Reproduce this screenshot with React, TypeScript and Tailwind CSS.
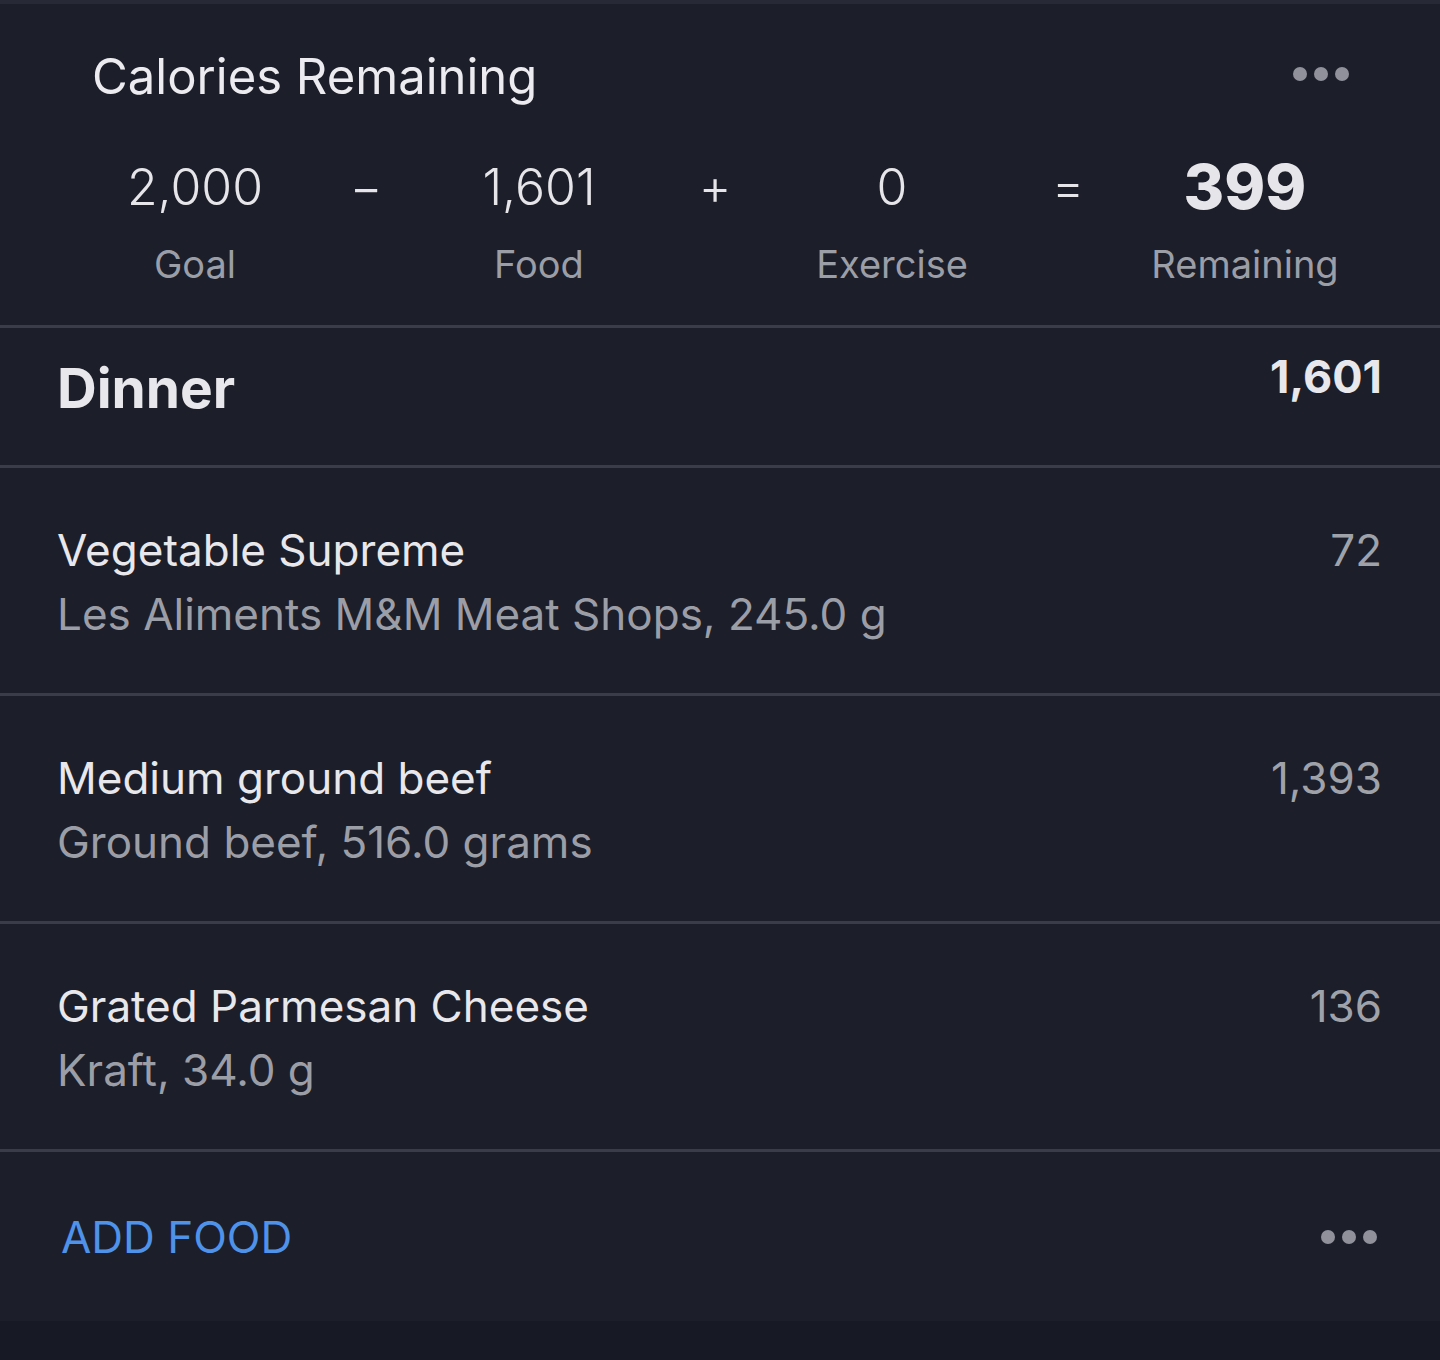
import React from "react";

type Entry = { name: string; detail: string; kcal: string };

const ENTRIES: Entry[] = [
  { name: "Vegetable Supreme", detail: "Les Aliments M&M Meat Shops, 245.0 g", kcal: "72" },
  { name: "Medium ground beef", detail: "Ground beef, 516.0 grams", kcal: "1,393" },
  { name: "Grated Parmesan Cheese", detail: "Kraft, 34.0 g", kcal: "136" },
];

function Dots() {
  return (
    <div className="flex items-center gap-[7px]">
      <span className="block w-[14px] h-[14px] rounded-full bg-[#90919b]" />
      <span className="block w-[14px] h-[14px] rounded-full bg-[#90919b]" />
      <span className="block w-[14px] h-[14px] rounded-full bg-[#90919b]" />
    </div>
  );
}

function Stat({ value, label, strong }: { value: string; label: string; strong?: boolean }) {
  return (
    <div className="flex flex-col items-center">
      <div
        className={
          strong
            ? "text-[62px] leading-[60px] font-extrabold text-[#e6e6ea]"
            : "text-[50px] leading-[60px] font-light text-[#e6e6ea]"
        }
      >
        {value}
      </div>
      <div className="mt-[22px] text-[38px] leading-[50px] text-[#9c9ea7]">{label}</div>
    </div>
  );
}

function Op({ sign }: { sign: string }) {
  return (
    <div className="flex justify-center">
      <div className="text-[50px] leading-[60px] font-light text-[#e6e6ea]">{sign}</div>
    </div>
  );
}

function Divider() {
  return <div className="h-[3px] bg-[#3a3d49]" />;
}

export default function App() {
  return (
    <div className="min-h-[1360px] bg-[#171a24] font-['Inter',sans-serif]">
      <div className="bg-[#1c1e29]">
        <div className="h-[4px] bg-[#272a36]" />

        {/* summary */}
        <div className="pt-[43px] pb-[36px]">
          <div className="flex items-center justify-between pl-[92px] pr-[91px]">
            <h1 className="text-[49px] leading-[60px] text-[#ececf0]">Calories Remaining</h1>
            <div className="mb-[6px]">
              <Dots />
            </div>
          </div>
          <div className="mt-[50px] ml-[109px] grid grid-cols-[172px_170px_176px_176px_178px_174px_180px]">
            <Stat value="2,000" label="Goal" />
            <Op sign="−" />
            <Stat value="1,601" label="Food" />
            <Op sign="+" />
            <Stat value="0" label="Exercise" />
            <Op sign="=" />
            <Stat value="399" label="Remaining" strong />
          </div>
        </div>
        <Divider />

        {/* meal header */}
        <div className="flex justify-between pl-[57px] pr-[58px] pt-[22px] h-[137px]">
          <div className="mt-[5px] text-[55px] leading-[66px] font-bold text-[#e8e8ec]">Dinner</div>
          <div className="text-[45px] leading-[54px] font-bold text-[#e8e8ec]">1,601</div>
        </div>
        <Divider />

        {ENTRIES.map((e) => (
          <React.Fragment key={e.name}>
            <div className="flex justify-between pl-[57px] pr-[58px] pt-[50px] pb-[47px]">
              <div>
                <div className="text-[44px] leading-[64px] text-[#e8e8ec]">{e.name}</div>
                <div className="text-[44px] leading-[64px] text-[#9c9ea7]">{e.detail}</div>
              </div>
              <div className="text-[44px] leading-[64px] text-[#a0a2aa]">{e.kcal}</div>
            </div>
            <Divider />
          </React.Fragment>
        ))}

        {/* footer */}
        <div className="flex items-center justify-between pl-[61px] pr-[63px] h-[169px]">
          <button className="text-[44px] leading-[50px] text-[#4f92ea]">ADD FOOD</button>
          <Dots />
        </div>
      </div>
    </div>
  );
}
